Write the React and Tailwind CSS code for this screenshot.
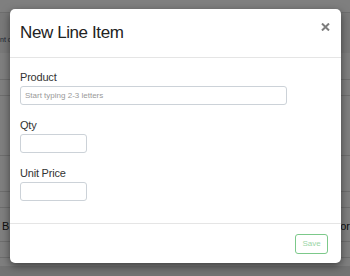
import React from "react";

// Background page rows, dimmed by the backdrop
const PageBehind = () => (
  <div className="flex flex-col">
    <div className="h-[13px] border-b border-[#dcdcdc]" />
    <div className="h-[40px] bg-[#f2f2f2] flex items-center pt-[14px] text-[7px] text-[#3a4a66] whitespace-nowrap">
      <span>nt due</span>
    </div>
    <div className="h-[27px] border-b border-[#dcdcdc]" />
    <div className="h-[16px] border-b border-[#dcdcdc]" />
    <div className="h-[60px] border-b border-[#dcdcdc]" />
    <div className="h-[36px] border-b border-[#dcdcdc]" />
    <div className="h-[16px] border-b border-[#dcdcdc]" />
    <div className="h-[34px] border-b border-[#dcdcdc] flex items-center justify-between pt-[4px] text-[11px] text-[#222]">
      <span className="pl-[2px]">B</span>
      <span className="whitespace-nowrap">or</span>
    </div>
    <div className="h-[16px] border-b border-[#dcdcdc]" />
    <div className="h-[8px]" />
    <div className="h-[10px] bg-[#e6e6e6]" />
  </div>
);

const Field = ({ label, placeholder, wide }) => (
  <div className="flex flex-col">
    <label className="h-[14px] leading-[14px] text-[11px] tracking-[-0.2px] text-[#333]">
      {label}
    </label>
    <input
      type="text"
      placeholder={placeholder}
      className={`mt-[2px] h-[19px] ${wide ? "w-[267px]" : "w-[67px]"} rounded-[3px] border border-[#ccd2d8] bg-white px-[4px] text-[8px] text-[#333] placeholder:text-[#999] outline-none`}
    />
  </div>
);

export default function App() {
  return (
    <div className="relative w-[350px] h-[276px] overflow-hidden bg-white font-['Liberation_Sans',Arial,sans-serif]">
      <PageBehind />

      {/* backdrop */}
      <div className="absolute inset-0 bg-black/50" />

      {/* modal */}
      <div className="absolute left-[10px] top-[9px] w-[331px] bg-white rounded-[5px] shadow-[0_3px_9px_rgba(0,0,0,0.5)] flex flex-col">
        <div className="h-[49px] border-b border-[#e5e5e5] pl-[10px] pr-[11px] pt-[12px] flex items-start justify-between">
          <h4 className="text-[17px] leading-[24px] tracking-[-0.4px] text-[#222]">New Line Item</h4>
          <button className="mt-[2px] text-[#7d7d7d]">
            <svg width="9" height="8" viewBox="0 0 9 8">
              <path d="M1 0.5 L8 7.5 M8 0.5 L1 7.5" stroke="currentColor" strokeWidth="2" />
            </svg>
          </button>
        </div>

        <div className="pl-[10px] pt-[12px] pb-[22px] flex flex-col gap-[13px]">
          <Field label="Product" placeholder="Start typing 2-3 letters" wide />
          <Field label="Qty" />
          <Field label="Unit Price" />
        </div>

        <div className="h-[40px] border-t border-[#e5e5e5] pt-[10px] pr-[13px] flex justify-end items-start">
          <button className="h-[20px] w-[33px] rounded-[3px] border border-[#7cc98a] bg-white text-[8px] text-[#9bd5a6]">
            Save
          </button>
        </div>
      </div>
    </div>
  );
}
